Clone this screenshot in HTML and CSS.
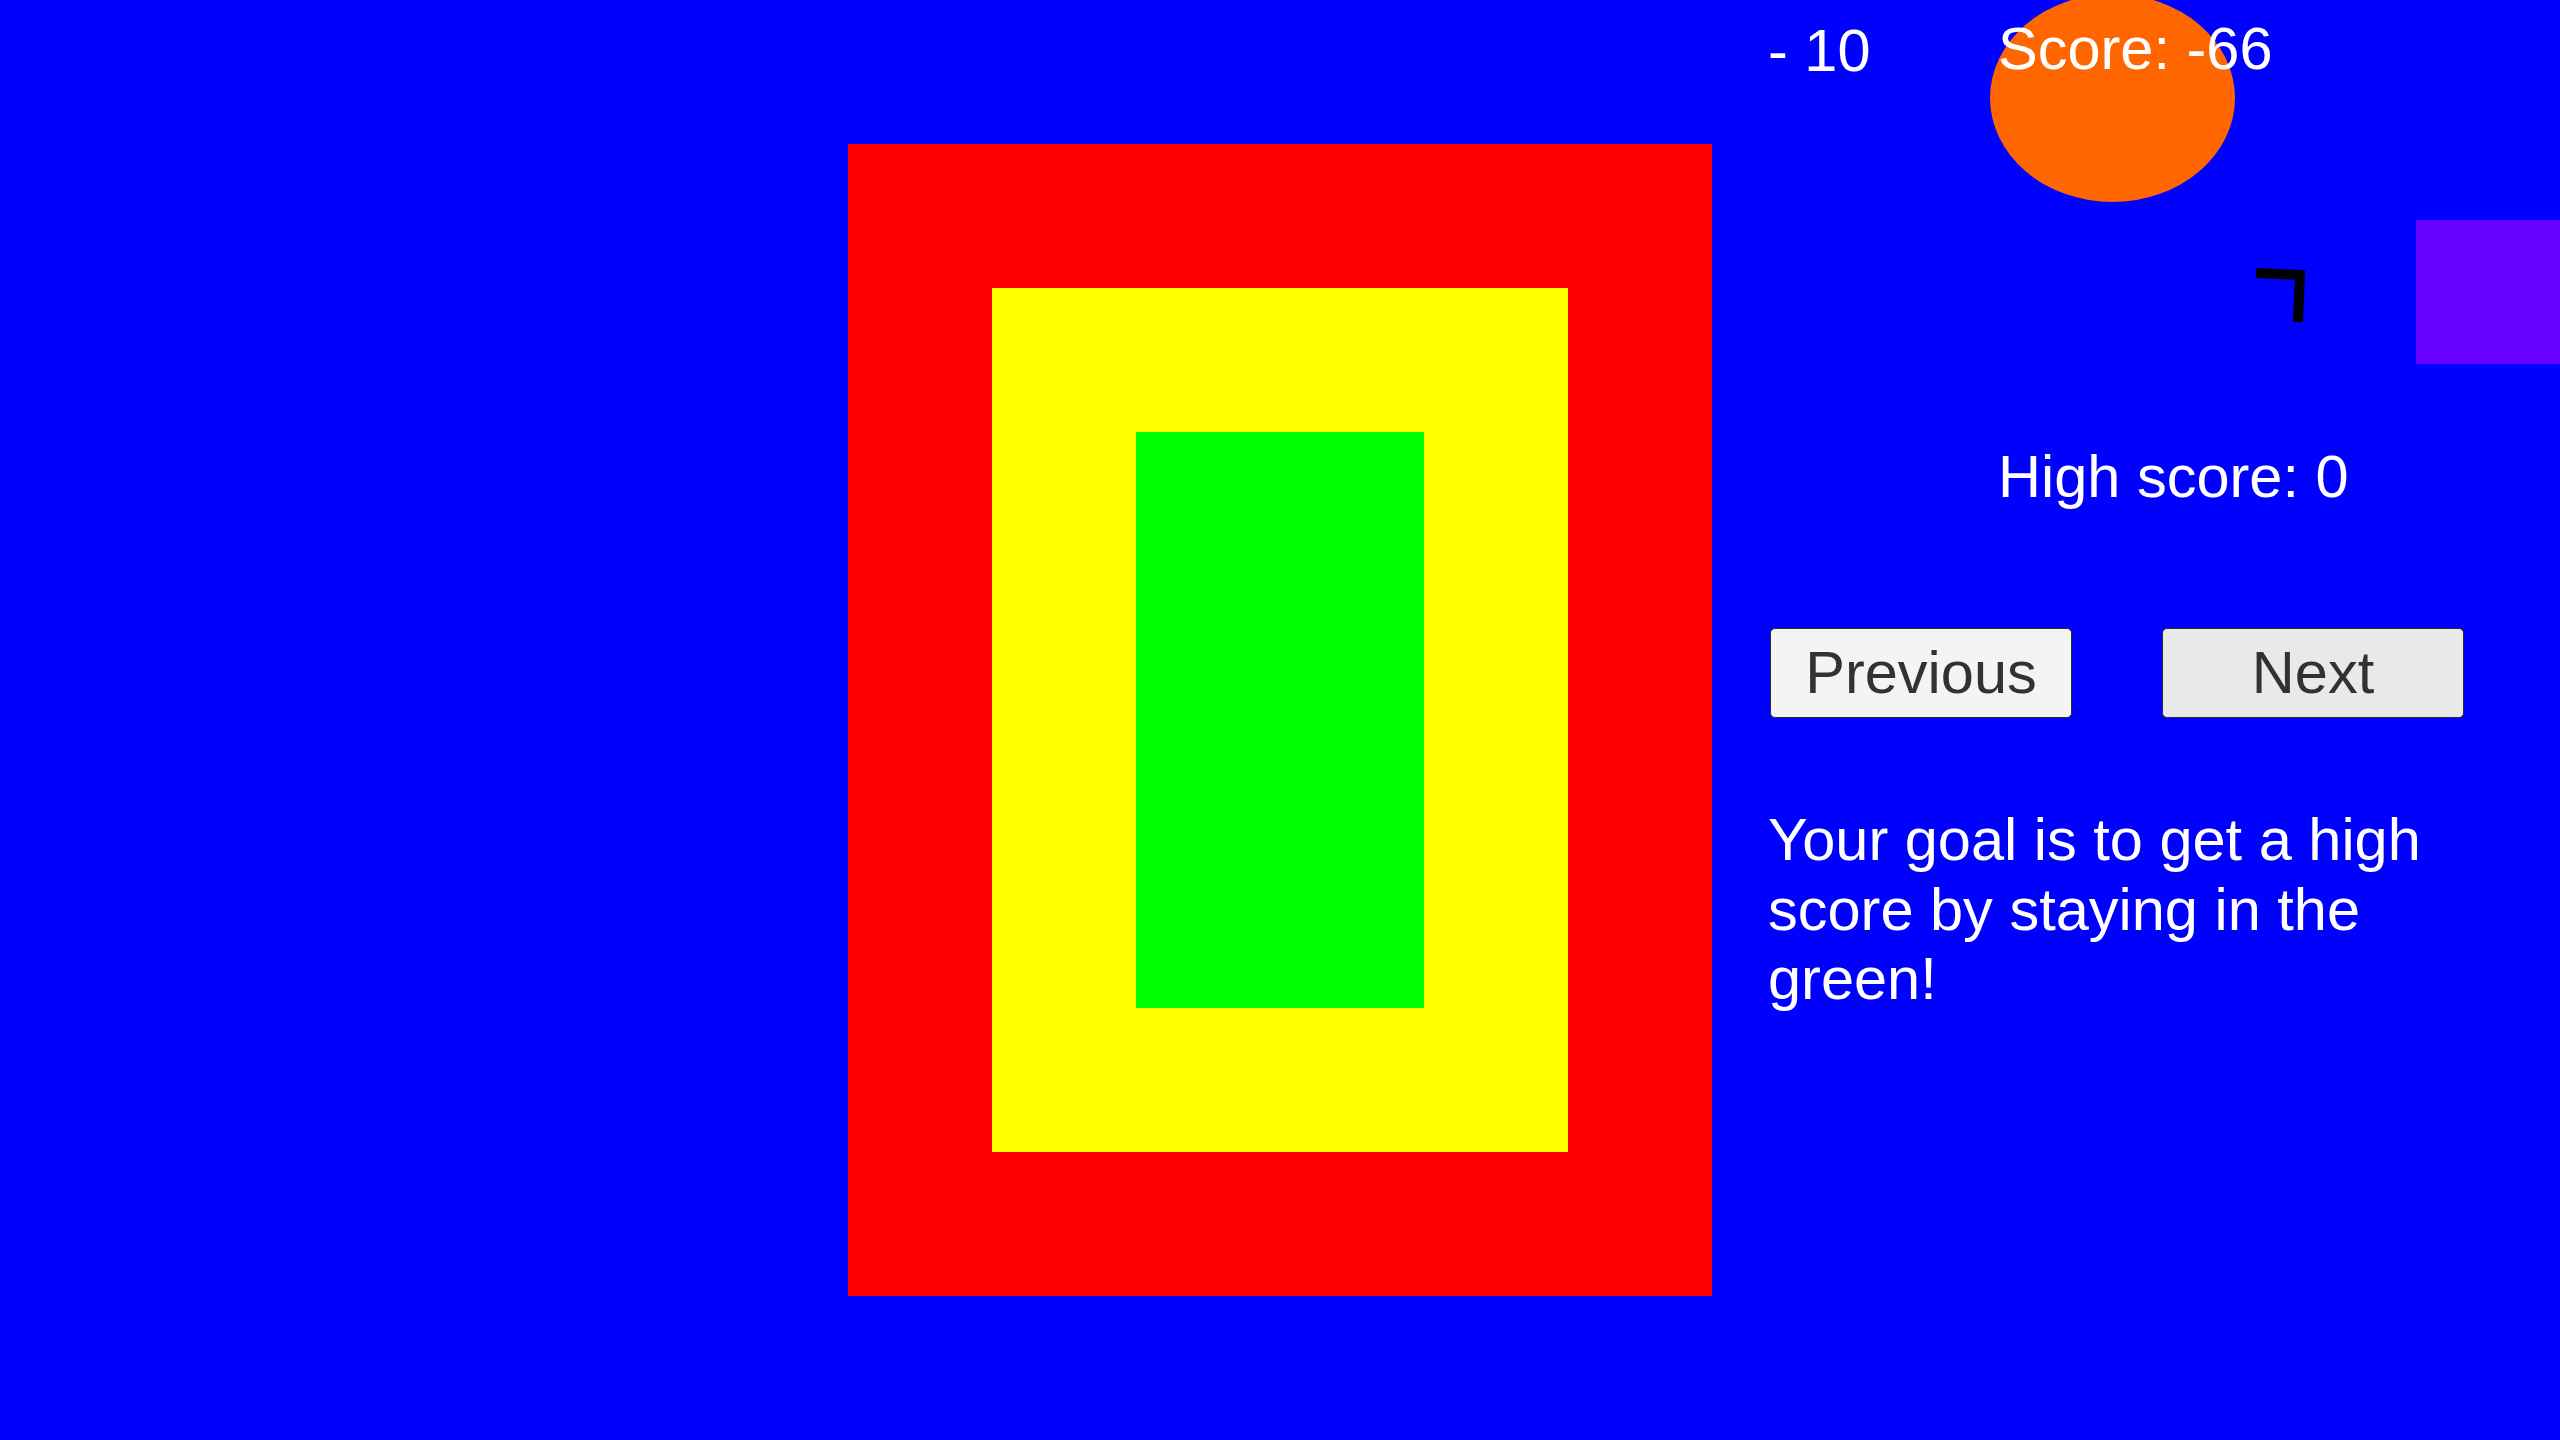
FILE: index.html
```html
<!DOCTYPE html>
<html lang="en">
<head>
<meta charset="utf-8">
<title>Stay in the green</title>
<link rel="stylesheet" href="styles.css">
</head>
<body>
<div class="screen">
  <div class="ball"></div>
  <svg class="cursor" width="60" height="70" viewBox="0 0 60 70">
    <polyline points="6,13 50,15 48,62" fill="none" stroke="#000" stroke-width="10" stroke-linejoin="miter"/>
  </svg>
  <div class="block"></div>

  <div class="target">
    <div class="zone-yellow">
      <div class="zone-green"></div>
    </div>
  </div>

  <div class="panel">
    <div class="score-row">
      <span class="delta">- 10</span>
      <span class="score">Score: -66</span>
    </div>
    <div class="high-score">High score: 0</div>
    <div class="buttons">
      <button class="btn btn-prev">Previous</button>
      <button class="btn btn-next">Next</button>
    </div>
    <p class="goal">Your goal is to get a high score by staying in the green!</p>
  </div>
</div>
</body>
</html>
```

FILE: styles.css
```css
html, body {
  margin: 0;
  padding: 0;
}

body {
  background: #0000ff;
  font-family: "Liberation Sans", Arial, sans-serif;
  overflow: hidden;
}

.screen {
  position: relative;
  width: 2560px;
  height: 1440px;
  display: flex;
  align-items: flex-start;
  padding-left: 848px;
  box-sizing: border-box;
  overflow: hidden;
}

/* free-canvas game objects */
.ball {
  position: absolute;
  left: 1990px;
  top: -6px;
  width: 245px;
  height: 208px;
  border-radius: 50%;
  background: #ff6600;
}

.cursor {
  position: absolute;
  left: 2250px;
  top: 260px;
}

.block {
  position: absolute;
  left: 2416px;
  top: 220px;
  width: 144px;
  height: 144px;
  background: #6600ff;
}

/* target zones */
.target {
  margin-top: 144px;
  width: 864px;
  height: 1152px;
  padding: 144px;
  box-sizing: border-box;
  background: #ff0000;
  flex: none;
}

.zone-yellow {
  width: 100%;
  height: 100%;
  padding: 144px;
  box-sizing: border-box;
  background: #ffff00;
}

.zone-green {
  width: 100%;
  height: 100%;
  background: #00ff00;
}

/* right panel */
.panel {
  position: relative;
  margin-left: 56px;
  width: 700px;
  display: flex;
  flex-direction: column;
  color: #ffffff;
  font-size: 59.5px;
  line-height: 70px;
}

.score-row {
  display: flex;
  align-items: flex-start;
  margin-top: 14px;
}

.delta {
  width: 230px;
  margin-top: 2px;
}

.high-score {
  margin-top: 356px;
  margin-left: 230px;
}

.buttons {
  display: flex;
  gap: 90px;
  margin-top: 116px;
  margin-left: 2px;
}

.btn {
  width: 302px;
  height: 90px;
  padding: 0;
  border: 1px solid #2e2e2e;
  border-radius: 5px;
  font-family: "Liberation Sans", Arial, sans-serif;
  font-size: 59.5px;
  color: #323232;
  line-height: 1;
  display: flex;
  align-items: center;
  justify-content: center;
  box-sizing: border-box;
}

.btn-prev {
  background: #f4f4f4;
}

.btn-next {
  background: #e9e9e9;
}

.goal {
  margin: 87px 0 0 0;
  line-height: 69.5px;
}
```
